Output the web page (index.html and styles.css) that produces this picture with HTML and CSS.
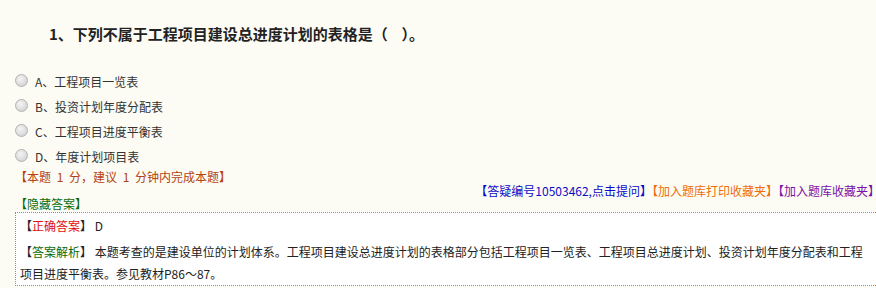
FILE: index.html
```html
<!DOCTYPE html>
<html lang="zh-CN">
<head>
    <meta charset="UTF-8">
    <title>试题</title>
    <link rel="stylesheet" href="styles.css">
</head>
<body>
    <div class="wrap">
        <h3 class="title">1、下列不属于工程项目建设总进度计划的表格是（&nbsp;&nbsp;&nbsp;&nbsp;）。</h3>
        <ul class="options">
            <li class="option"><span class="radio"></span>A、工程项目一览表</li>
            <li class="option"><span class="radio"></span>B、投资计划年度分配表</li>
            <li class="option"><span class="radio"></span>C、工程项目进度平衡表</li>
            <li class="option"><span class="radio"></span>D、年度计划项目表</li>
        </ul>
        <div class="score">【本题 1 分，建议 1 分钟内完成本题】</div>
        <div class="links">
            <a class="ask">【答疑编号10503462,点击提问】</a><a class="print">【加入题库打印收藏夹】</a><a class="fav">【加入题库收藏夹】</a>
        </div>
        <div class="toggle">【隐藏答案】</div>
        <div class="answer">
            <p class="right">【<span class="red">正确答案</span>】 D</p>
            <p class="analysis">【<span class="green">答案解析</span>】 本题考查的是建设单位的计划体系。工程项目建设总进度计划的表格部分包括工程项目一览表、工程项目总进度计划、投资计划年度分配表和工程项目进度平衡表。参见教材P86～87。</p>
        </div>
    </div>
</body>
</html>
```

FILE: styles.css
```css
*{
    margin: 0;
    padding: 0;
}
body{
    background-color: #fdfcf4;
    font-family: "Noto Sans CJK SC", "Liberation Sans", sans-serif;
    font-size: 12px;
    color: #222;
    overflow: hidden;
}
.wrap{
    width: 865px;
    margin-left: 15px;
}
.title{
    padding: 24px 0 0 34px;
    font-size: 15px;
    line-height: 20px;
    font-weight: bold;
    color: #222;
}
.options{
    list-style: none;
    margin-top: 25px;
}
.option{
    display: flex;
    align-items: center;
    height: 25px;
    line-height: 25px;
    color: #333;
}
.radio{
    width: 11px;
    height: 11px;
    border: 1px solid #b2b2b2;
    border-radius: 50%;
    background: radial-gradient(circle at 40% 35%, #f4f4f4 0%, #dcdcdc 60%, #c8c8c8 100%);
    margin-right: 7px;
    margin-top: -3px;
}
.score{
    line-height: 16px;
    color: #b4420e;
    word-spacing: 3px;
}
.links{
    text-align: right;
    line-height: 12px;
    white-space: nowrap;
}
.links a{
    cursor: pointer;
}
.ask{
    color: #0a0ac8;
}
.print{
    color: #ee6d0c;
}
.fav{
    color: #7a12a8;
}
.toggle{
    line-height: 14px;
    color: #0b6b0b;
    margin-bottom: 1px;
}
.answer{
    background-color: #fff;
    border: 1px dotted #c8843f;
    padding: 5px 10px 0 4px;
}
.right{
    line-height: 16px;
}
.red{
    color: #e01010;
}
.green{
    color: #0b6b0b;
}
.analysis{
    margin-top: 7px;
    line-height: 22px;
}
```
